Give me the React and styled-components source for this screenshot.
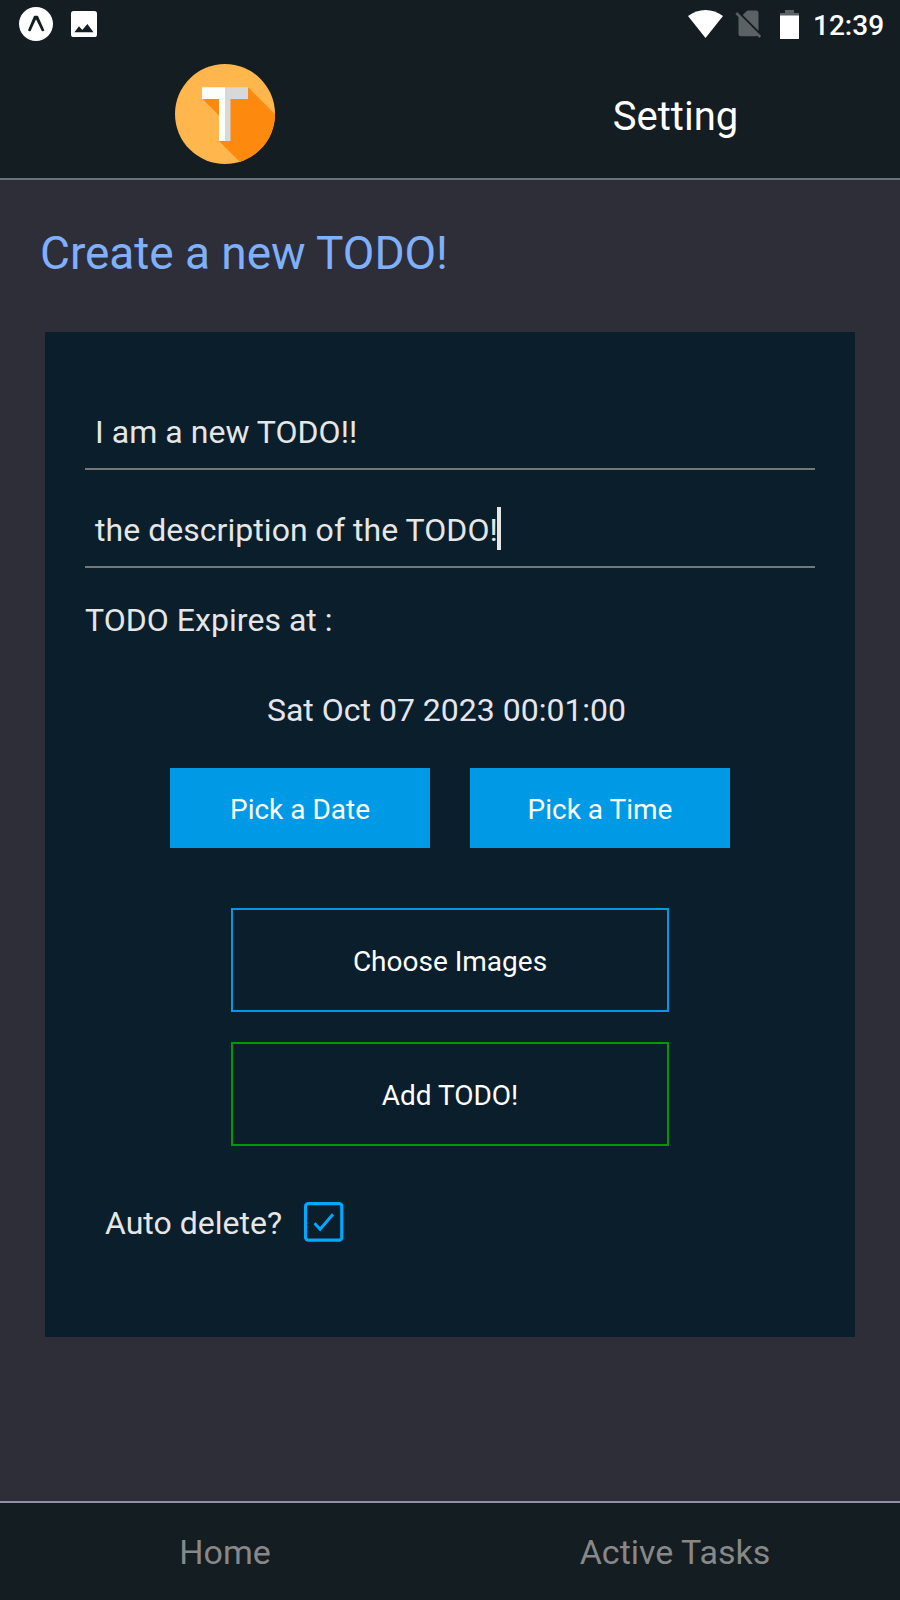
import React from "react";
import styled, { createGlobalStyle } from "styled-components";

const GlobalStyle = createGlobalStyle`
  * { box-sizing: border-box; }
  body { margin: 0; background: #2e2e38; font-family: Roboto, "Liberation Sans", sans-serif; }
  button { font-family: inherit; cursor: pointer; }
`;

const Screen = styled.div`
  width: 900px;
  height: 1600px;
  display: flex;
  flex-direction: column;
  background: #2e2e38;
  overflow: hidden;
`;

const Header = styled.header`
  height: 180px;
  background: #141d22;
  border-bottom: 2px solid #65747f;
`;

const StatusBar = styled.div`
  height: 48px;
  padding: 0 16px 0 19px;
  display: flex;
  align-items: center;
  justify-content: space-between;
`;

const StatusGroup = styled.div`
  display: flex;
  align-items: center;
  gap: ${({ $gap }) => $gap}px;
  svg { display: block; }
`;

const Clock = styled.span`
  width: 71px;
  padding-top: 3px;
  font-size: 28px;
  font-weight: 500;
  line-height: 32px;
  color: #fff;
  white-space: nowrap;
`;

const TopNav = styled.nav`
  height: 130px;
  display: grid;
  grid-template-columns: 1fr 1fr;
  align-items: center;
  justify-items: center;
`;

const SettingLink = styled.a`
  padding: 7px 0 0 1px;
  font-size: 40px;
  line-height: 46px;
  color: #fff;
`;

const Logo = styled.svg`
  display: block;
  margin-top: 2px;
`;

const Main = styled.main`
  flex: 1;
  padding: 46px 45px 0 40px;
`;

const Title = styled.h1`
  margin: 0;
  font-size: 46px;
  font-weight: 400;
  line-height: 54px;
  letter-spacing: -0.05px;
  color: #7fb0ff;
`;

const Card = styled.section`
  margin: 52px 0 0 5px;
  height: 1005px;
  padding: 62px 40px 0;
  background: #0a1e2b;
`;

const Field = styled.div`
  height: ${({ $height }) => $height}px;
  padding: ${({ $height }) => $height - 60}px 10px 0;
  display: flex;
  align-items: flex-start;
  border-bottom: 2px solid #767676;
  font-size: 32px;
  line-height: 44px;
  letter-spacing: 0.04px;
  color: #e6e6e6;
  white-space: pre;
`;

const Caret = styled.span`
  width: 4px;
  height: 43px;
  margin: -1px 0 0 -1px;
  background: #e6e6e6;
`;

const Label = styled.div`
  padding: 32px 0 0;
  font-size: 32px;
  line-height: 40px;
  letter-spacing: 0.04px;
  color: #e6e6e6;
`;

const DateText = styled.div`
  padding: 50px 7px 0 0;
  font-size: 32px;
  line-height: 40px;
  text-align: center;
  color: #e5e5ee;
`;

const PickerRow = styled.div`
  display: flex;
  justify-content: center;
  gap: 40px;
  padding-top: 38px;
`;

const PickButton = styled.button`
  width: 260px;
  height: 80px;
  padding: 3px 0 0;
  border: 0;
  background: #0099e6;
  font-size: 28px;
  line-height: 32px;
  color: #fff;
`;

const Actions = styled.div`
  display: flex;
  flex-direction: column;
  align-items: center;
  gap: 30px;
  padding-top: 60px;
`;

const OutlineButton = styled.button`
  width: 438px;
  height: 104px;
  padding: 3px 0 0;
  border: 2px solid ${({ $color }) => $color};
  background: transparent;
  font-size: 28px;
  line-height: 32px;
  color: #fff;
`;

const CheckRow = styled.label`
  display: flex;
  align-items: center;
  gap: 22px;
  padding: 55px 20px 0;
  font-size: 32px;
  line-height: 40px;
  color: #e6e6e6;
  svg { display: block; }
`;

const CheckLabel = styled.span`
  padding-top: 2px;
`;

const Footer = styled.nav`
  height: 99px;
  display: grid;
  grid-template-columns: 1fr 1fr;
  background: #141d22;
  border-top: 2px solid #9090a6;
`;

const Tab = styled.a`
  padding-top: 28px;
  text-align: center;
  font-size: 34px;
  line-height: 42px;
  color: #888;
`;

function ExpoIcon() {
  return (
    <svg width="34" height="34" viewBox="0 0 34 34">
      <circle cx="17" cy="17" r="17" fill="#fff" />
      <path d="M9 23.2L14.8 9.6Q15 8.8 15.8 8.8H18.2Q19 8.8 19.2 9.6L25.3 23.2Q24.5 25 22.8 24L17.3 12.8H16.8L11.6 24Q10 25 9 23.2Z" fill="#141d22" />
    </svg>
  );
}

function ImageIcon() {
  return (
    <svg width="26" height="26" viewBox="0 0 26 26">
      <rect width="26" height="26" rx="2.6" fill="#fff" />
      <path d="M3.4 21.3L8 15.2L11.3 19L16.4 13L22.5 21.3Z" fill="#141d22" />
    </svg>
  );
}

function WifiIcon() {
  return (
    <svg width="35" height="28" viewBox="0 0 35 28">
      <path d="M0 6Q8 0 17.5 0T35 6L17.5 28Z" fill="#fff" />
    </svg>
  );
}

function NoSimIcon() {
  return (
    <svg width="27" height="28" viewBox="0 0 27 28">
      <path d="M7.7 5.1L11.5 1.2Q12.2.5 13.2.5H21Q23.5.5 23.5 3V20.8ZM3.5 5.5L23 25Q22.5 26.2 21 26.2H6Q3.5 26.2 3.5 23.7Z" fill="#5b6164" />
      <path d="M1.3 3L25.3 27" stroke="#5b6164" strokeWidth="2.5" fill="none" />
    </svg>
  );
}

function BatteryIcon() {
  return (
    <svg width="19" height="29" viewBox="0 0 19 29">
      <path d="M5 0H14V3H19V7H0V3H5Z" fill="#5b6164" />
      <rect y="5.5" width="19" height="23.5" fill="#fff" />
    </svg>
  );
}

function TodoLogo() {
  return (
    <Logo width="100" height="100" viewBox="0 0 100 100">
      <defs>
        <clipPath id="disc"><circle cx="50" cy="50" r="50" /></clipPath>
      </defs>
      <circle cx="50" cy="50" r="50" fill="#ffb64d" />
      <path d="M73 23.3L123 73.3V135H102L44 77V51.5L27.3 34.8Z" fill="#fd890e" clipPath="url(#disc)" />
      <path d="M27 23.3H50V77H44V35H27Z" fill="#fafffa" />
      <path d="M50 23.3H73V35H55.5V77H50Z" fill="#d8d8d8" />
    </Logo>
  );
}

function CheckedBox() {
  return (
    <svg width="40" height="40" viewBox="0 0 40 40">
      <rect x="1.6" y="1.6" width="36.2" height="36.6" rx="2.6" stroke="#00a8ff" strokeWidth="3.2" fill="none" />
      <path d="M10.5 21.3L16.1 27.2L29 12.2" stroke="#00a8ff" strokeWidth="3" fill="none" />
    </svg>
  );
}

export default function App() {
  return (
    <>
      <GlobalStyle />
      <Screen>
        <Header>
          <StatusBar>
            <StatusGroup $gap={18}>
              <ExpoIcon />
              <ImageIcon />
            </StatusGroup>
            <StatusGroup $gap={14}>
              <StatusGroup $gap={18}>
                <StatusGroup $gap={12}>
                  <WifiIcon />
                  <NoSimIcon />
                </StatusGroup>
                <BatteryIcon />
              </StatusGroup>
              <Clock>12:39</Clock>
            </StatusGroup>
          </StatusBar>
          <TopNav>
            <TodoLogo />
            <SettingLink>Setting</SettingLink>
          </TopNav>
        </Header>
        <Main>
          <Title>Create a new TODO!</Title>
          <Card>
            <Field $height={76}>I am a new TODO!!</Field>
            <Field $height={98}>the description of the TODO!<Caret /></Field>
            <Label>TODO Expires at :</Label>
            <DateText>Sat Oct 07 2023 00:01:00</DateText>
            <PickerRow>
              <PickButton>Pick a Date</PickButton>
              <PickButton>Pick a Time</PickButton>
            </PickerRow>
            <Actions>
              <OutlineButton $color="#0099e6">Choose Images</OutlineButton>
              <OutlineButton $color="#009900">Add TODO!</OutlineButton>
            </Actions>
            <CheckRow>
              <CheckLabel>Auto delete?</CheckLabel>
              <CheckedBox />
            </CheckRow>
          </Card>
        </Main>
        <Footer>
          <Tab>Home</Tab>
          <Tab>Active Tasks</Tab>
        </Footer>
      </Screen>
    </>
  );
}
